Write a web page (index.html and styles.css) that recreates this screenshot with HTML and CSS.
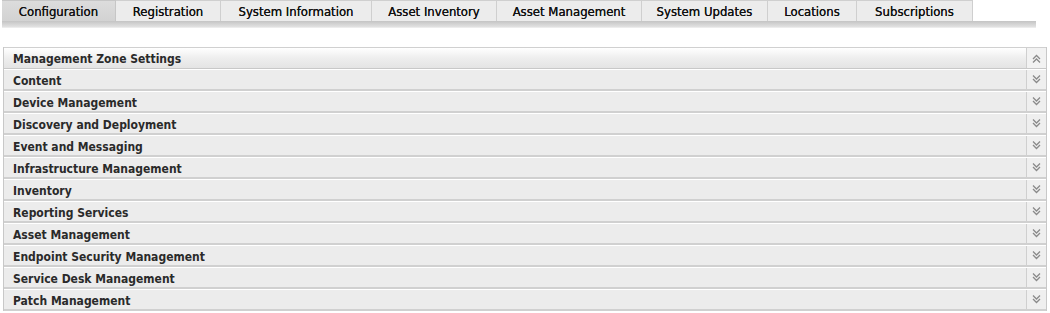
FILE: index.html
```html
<!DOCTYPE html>
<html lang="en">

<head>
    <meta charset="UTF-8">
    <title>Configuration</title>
    <link rel="stylesheet" href="styles.css">
</head>

<body>
    <div class="tabs">
        <div class="tab-row">
            <a class="tab active">Configuration</a>
            <a class="tab w-reg">Registration</a>
            <a class="tab w-sys">System Information</a>
            <a class="tab w-inv">Asset Inventory</a>
            <a class="tab w-am">Asset Management</a>
            <a class="tab w-upd">System Updates</a>
            <a class="tab w-loc">Locations</a>
            <a class="tab w-sub">Subscriptions</a>
        </div>
        <div class="tab-bar"></div>
    </div>

    <div class="panel">
        <div class="row open">
            <span class="label">Management Zone Settings</span>
            <span class="toggle">
                <svg width="9" height="9" viewBox="0 0 9 9"><path d="M1 5 L4.5 1.5 L8 5 M1 8.5 L4.5 5 L8 8.5" fill="none" stroke="#8a8a8a" stroke-width="1.3"/></svg>
            </span>
        </div>
        <div class="row"><span class="label">Content</span><span class="toggle"><svg width="9" height="9" viewBox="0 0 9 9"><path d="M1 0.5 L4.5 4 L8 0.5 M1 4 L4.5 7.5 L8 4" fill="none" stroke="#8a8a8a" stroke-width="1.3"/></svg></span></div>
        <div class="row"><span class="label">Device Management</span><span class="toggle"><svg width="9" height="9" viewBox="0 0 9 9"><path d="M1 0.5 L4.5 4 L8 0.5 M1 4 L4.5 7.5 L8 4" fill="none" stroke="#8a8a8a" stroke-width="1.3"/></svg></span></div>
        <div class="row"><span class="label">Discovery and Deployment</span><span class="toggle"><svg width="9" height="9" viewBox="0 0 9 9"><path d="M1 0.5 L4.5 4 L8 0.5 M1 4 L4.5 7.5 L8 4" fill="none" stroke="#8a8a8a" stroke-width="1.3"/></svg></span></div>
        <div class="row"><span class="label">Event and Messaging</span><span class="toggle"><svg width="9" height="9" viewBox="0 0 9 9"><path d="M1 0.5 L4.5 4 L8 0.5 M1 4 L4.5 7.5 L8 4" fill="none" stroke="#8a8a8a" stroke-width="1.3"/></svg></span></div>
        <div class="row"><span class="label">Infrastructure Management</span><span class="toggle"><svg width="9" height="9" viewBox="0 0 9 9"><path d="M1 0.5 L4.5 4 L8 0.5 M1 4 L4.5 7.5 L8 4" fill="none" stroke="#8a8a8a" stroke-width="1.3"/></svg></span></div>
        <div class="row"><span class="label">Inventory</span><span class="toggle"><svg width="9" height="9" viewBox="0 0 9 9"><path d="M1 0.5 L4.5 4 L8 0.5 M1 4 L4.5 7.5 L8 4" fill="none" stroke="#8a8a8a" stroke-width="1.3"/></svg></span></div>
        <div class="row"><span class="label">Reporting Services</span><span class="toggle"><svg width="9" height="9" viewBox="0 0 9 9"><path d="M1 0.5 L4.5 4 L8 0.5 M1 4 L4.5 7.5 L8 4" fill="none" stroke="#8a8a8a" stroke-width="1.3"/></svg></span></div>
        <div class="row"><span class="label">Asset Management</span><span class="toggle"><svg width="9" height="9" viewBox="0 0 9 9"><path d="M1 0.5 L4.5 4 L8 0.5 M1 4 L4.5 7.5 L8 4" fill="none" stroke="#8a8a8a" stroke-width="1.3"/></svg></span></div>
        <div class="row"><span class="label">Endpoint Security Management</span><span class="toggle"><svg width="9" height="9" viewBox="0 0 9 9"><path d="M1 0.5 L4.5 4 L8 0.5 M1 4 L4.5 7.5 L8 4" fill="none" stroke="#8a8a8a" stroke-width="1.3"/></svg></span></div>
        <div class="row"><span class="label">Service Desk Management</span><span class="toggle"><svg width="9" height="9" viewBox="0 0 9 9"><path d="M1 0.5 L4.5 4 L8 0.5 M1 4 L4.5 7.5 L8 4" fill="none" stroke="#8a8a8a" stroke-width="1.3"/></svg></span></div>
        <div class="row"><span class="label">Patch Management</span><span class="toggle"><svg width="9" height="9" viewBox="0 0 9 9"><path d="M1 0.5 L4.5 4 L8 0.5 M1 4 L4.5 7.5 L8 4" fill="none" stroke="#8a8a8a" stroke-width="1.3"/></svg></span></div>
    </div>
</body>

</html>
```

FILE: styles.css
```css
* {
    padding: 0;
    margin: 0;
    box-sizing: border-box;
}

body {
    background: #fff;
    font-family: "DejaVu Sans Condensed", "DejaVu Sans", sans-serif;
    color: #1e1e1e;
    width: 1050px;
    height: 313px;
    overflow: hidden;
}

.tabs {
    padding-left: 2px;
    width: 1036px;
}

.tab-row {
    display: flex;
    height: 21px;
}

.tab {
    display: flex;
    align-items: center;
    justify-content: center;
    height: 21px;
    font-size: 13px;
    color: #111;
    background: #ececec;
    border: 1px solid #cfcfcf;
    border-bottom: none;
    border-left: none;
    padding-top: 1px;
    text-shadow: 0 0 0.4px #111;
}

.tab.active {
    width: 114px;
    background: linear-gradient(#dcdcdc, #d2d2d2);
    border-color: #c6c6c6;
}

.w-reg { width: 105px; }
.w-sys { width: 151px; }
.w-inv { width: 125px; }
.w-am { width: 145px; }
.w-upd { width: 126px; }
.w-loc { width: 89px; }
.w-sub { width: 116px; }

.tab-bar {
    height: 7px;
    background: linear-gradient(#c4c4c4, #d6d6d6 60%, #e2e2e2);
    border-bottom: 1px solid #ececec;
}

.panel {
    margin: 19px 3px 0 3px;
    border-left: 1px solid #c8c8c8;
    border-right: 1px solid #c8c8c8;
}

.row {
    display: flex;
    align-items: stretch;
    height: 22px;
    background: #ececec;
    border-top: 1px solid #ffffff;
    border-bottom: 2px solid #d0d0d0;
}

.row.open {
    background: linear-gradient(#ffffff, #eeeeee 50%, #e4e4e4);
    border-top: 1px solid #d0d0d0;
    border-bottom: 1px solid #c8c8c8;
}

.label {
    flex: 1;
    display: flex;
    align-items: center;
    padding: 2px 0 0 9px;
    font-size: 12px;
    font-weight: bold;
    color: #2a2a2a;
}

.toggle {
    width: 20px;
    display: flex;
    align-items: center;
    justify-content: center;
    border-left: 1px solid #cfcfcf;
    background: #efefef;
}

.row.open .toggle {
    background: #f2f2f2;
}
```
